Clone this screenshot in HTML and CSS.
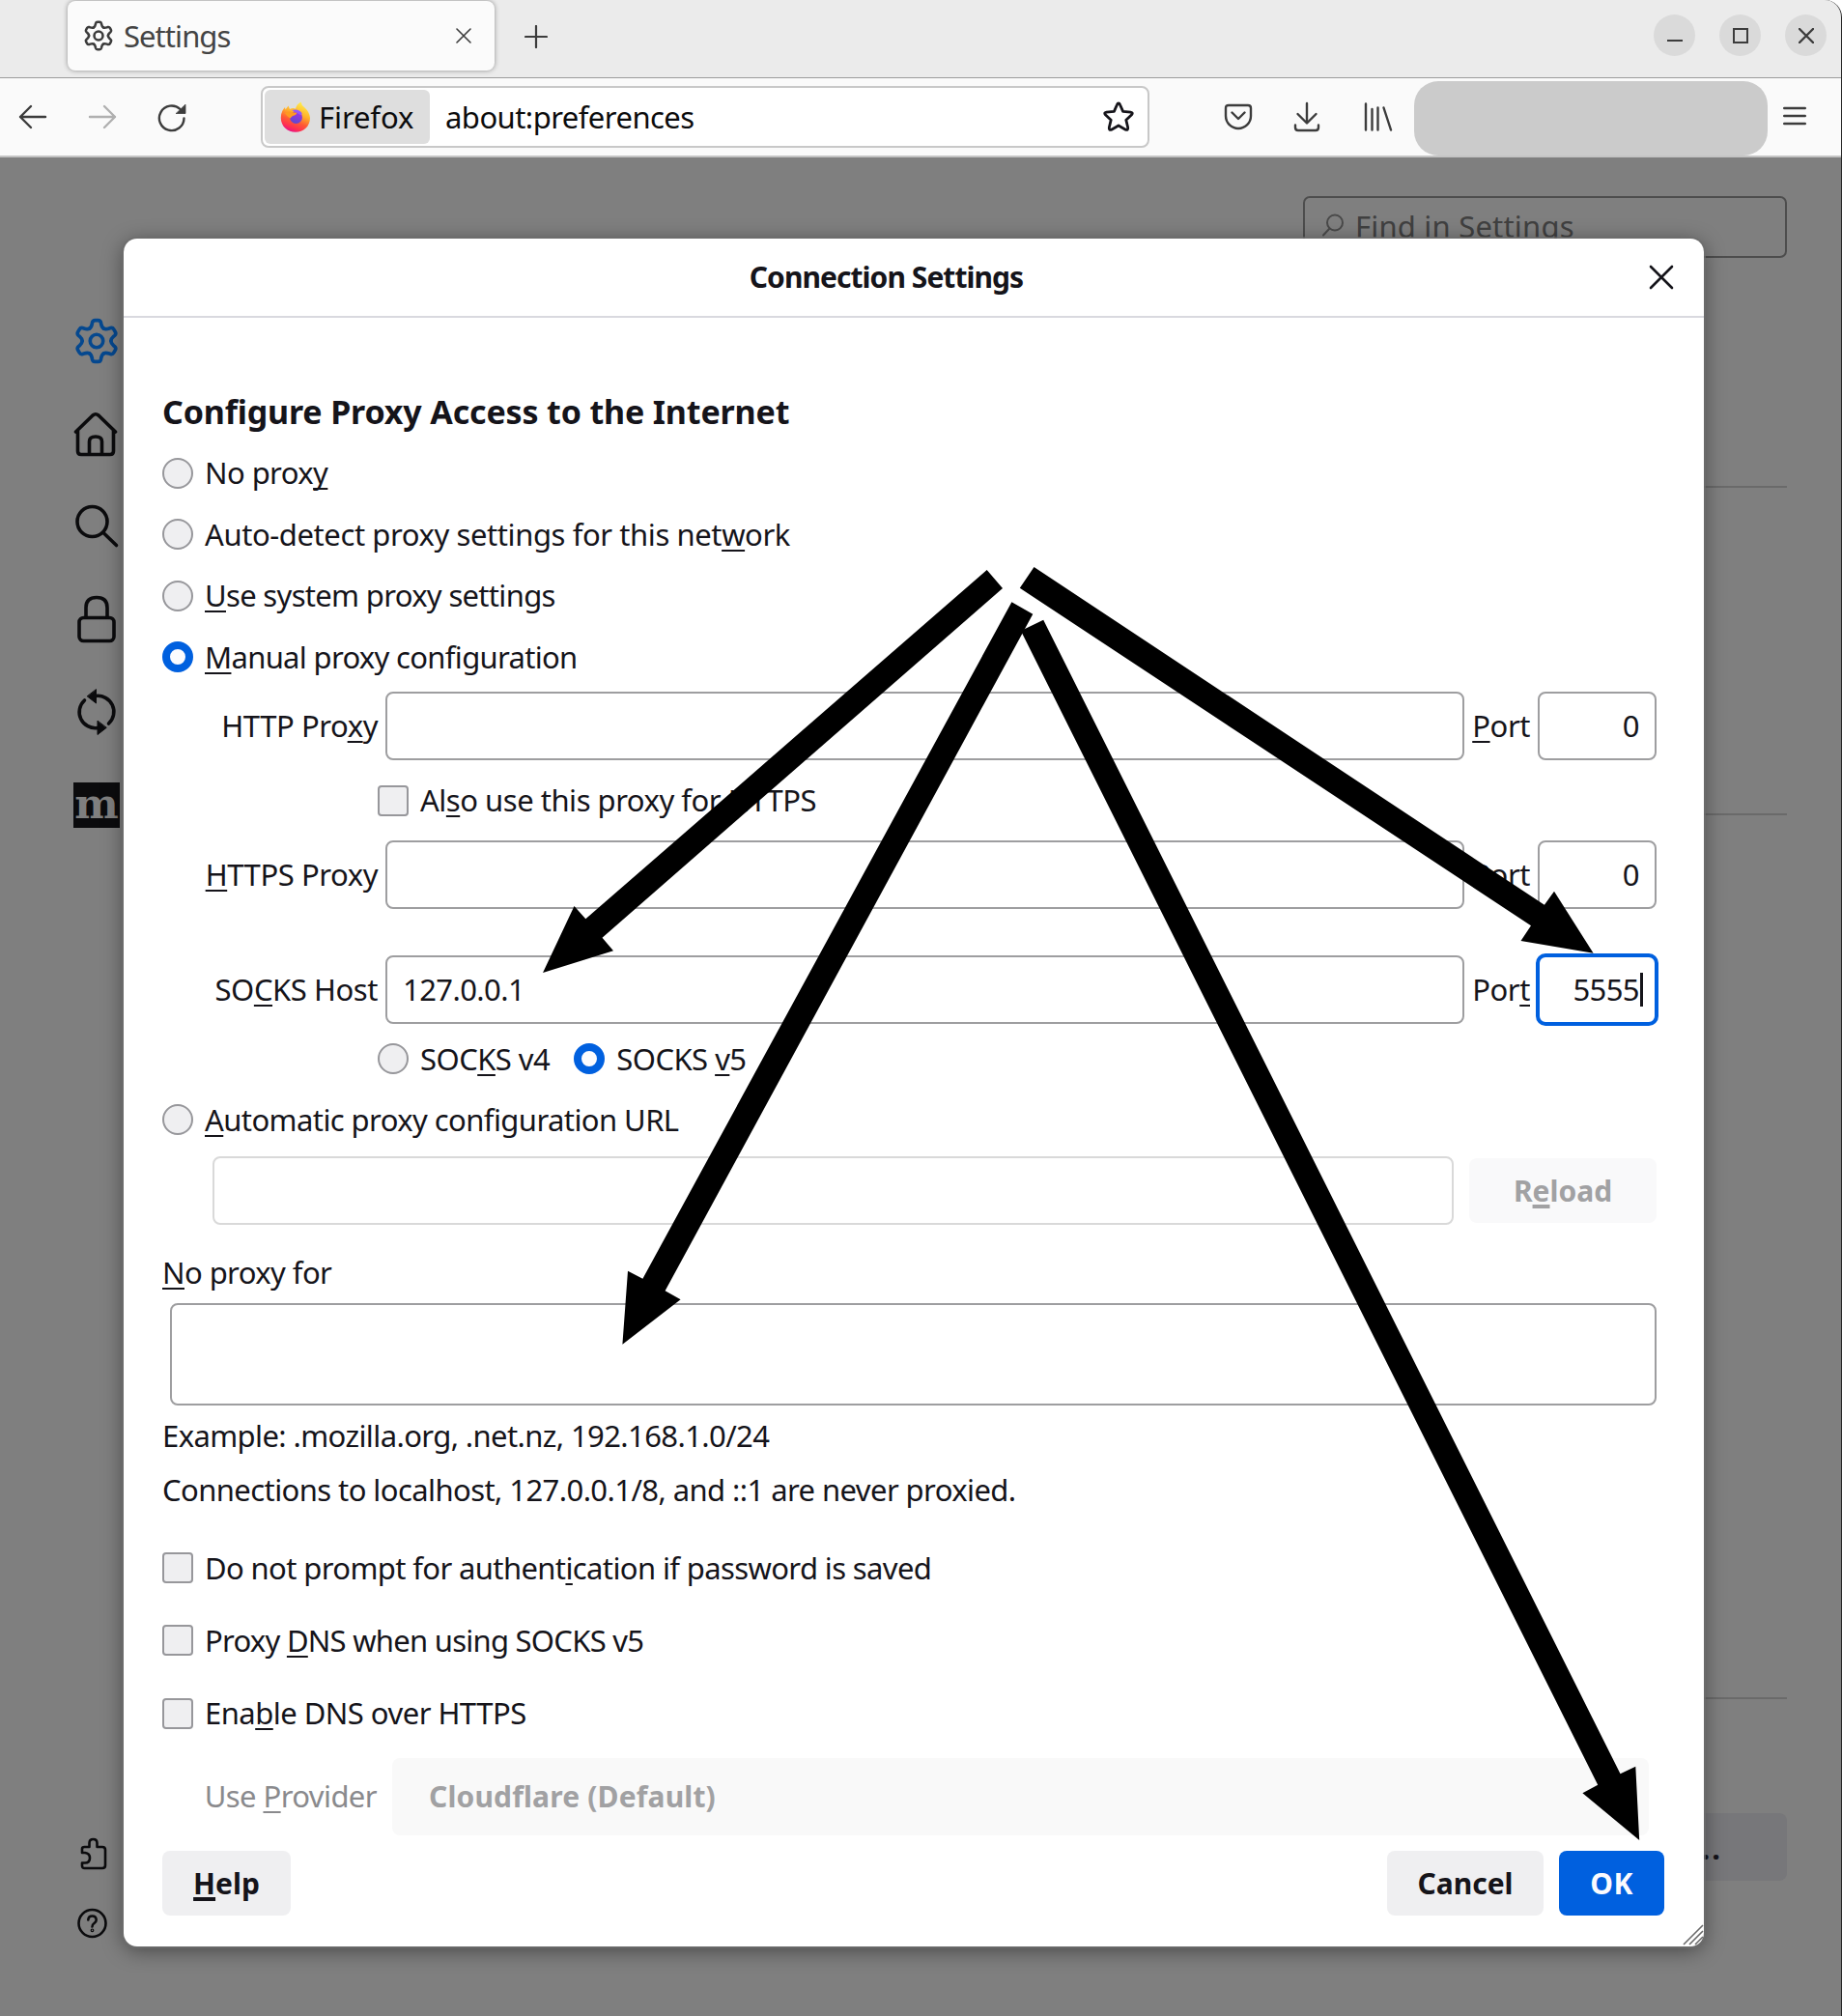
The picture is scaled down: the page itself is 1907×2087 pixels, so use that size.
FILE: index.html
```html
<!DOCTYPE html>
<html lang="en">
<head>
<meta charset="utf-8">
<title>Settings</title>
<link rel="stylesheet" href="styles.css">
</head>
<body>
<svg class="defs" width="0" height="0" aria-hidden="true">
  <defs>
    <path id="tooth" d="M-7.75 -13.4C-5.24 -14.85 -5.3 -17 -4.6 -20Q-4 -22.3 -1.7 -22.3H1.7Q4 -22.3 4.6 -20C5.3 -17 5.24 -14.85 7.75 -13.4"/>
    <g id="gear">
      <use href="#tooth"/><use href="#tooth" transform="rotate(60)"/><use href="#tooth" transform="rotate(120)"/>
      <use href="#tooth" transform="rotate(180)"/><use href="#tooth" transform="rotate(240)"/><use href="#tooth" transform="rotate(300)"/>
      <circle r="7"/>
    </g>
  </defs>
</svg>
<div class="window">
  <header class="tabs">
    <div class="tab">
      <svg class="icon" width="32" height="34" viewBox="-25 -26.5 50 53" stroke-width="4"><use href="#gear"/></svg>
      <span class="tab-title">Settings</span>
      <svg class="icon" width="16" height="16" viewBox="0 0 16 16" stroke-width="1.6"><path d="M1 1L15 15M15 1L1 15"/></svg>
    </div>
    <svg class="icon plus" width="24" height="24" viewBox="0 0 24 24" stroke-width="2.2"><path d="M12 1V23M1 12H23"/></svg>
    <div class="controls">
      <span class="control"><svg class="icon" width="16" height="16" viewBox="0 0 16 16" stroke-width="2"><path d="M0 13H16" stroke-linecap="butt"/></svg></span>
      <span class="control"><svg class="icon sharp" width="16" height="16" viewBox="0 0 16 16" stroke-width="2"><path d="M1 1H15V15H1Z"/></svg></span>
      <span class="control"><svg class="icon" width="16" height="16" viewBox="0 0 16 16" stroke-width="2.4"><path d="M1 1L15 15M15 1L1 15"/></svg></span>
    </div>
  </header>
  <nav class="toolbar">
    <svg class="icon back" width="30" height="26" viewBox="0 0 30 26" stroke-width="2.4"><path d="M28 13H2M13 2L2 13L13 24"/></svg>
    <svg class="icon forward" width="30" height="26" viewBox="0 0 30 26" stroke-width="2.4"><path d="M2 13H28M17 2L28 13L17 24"/></svg>
    <svg class="icon reload" width="30" height="30" viewBox="0 0 30 30" stroke-width="2.4"><path d="M27.500 15.500A12.800 12.800 0 1 1 23.500 6"/><path d="M29 1.500V10.500H19.500Z" fill="#3c3c3c" stroke-width=".8"/></svg>
    <div class="urlbar">
      <span class="identity">
        <svg width="32" height="32" viewBox="0 0 32 32">
          <defs>
            <linearGradient id="flame" x1=".75" y1="0" x2=".35" y2="1"><stop offset="0" stop-color="#fff44f"/><stop offset=".4" stop-color="#ffb02a"/><stop offset=".65" stop-color="#ff5a35"/><stop offset=".85" stop-color="#ff3050"/><stop offset="1" stop-color="#e6108a"/></linearGradient>
            <linearGradient id="globe" x1=".7" y1="0" x2=".3" y2="1"><stop offset="0" stop-color="#a633e0"/><stop offset="1" stop-color="#5a4ad0"/></linearGradient>
          </defs>
          <path d="M2.500 9.500Q3.500 7.500 5 6L5.500 8.500L8.500 4.500L10 8Q13 6.500 16 7.500Q17 3 21.500 .5Q22 4 25.500 6.500Q30.500 11 31 17C31 26 24 31.800 16 31.800S.8 26 .8 17Q.8 12.500 2.500 9.500Z" fill="url(#flame)"/>
          <circle cx="16.500" cy="16.500" r="6.500" fill="url(#globe)"/>
          <path d="M5 12Q10 9.500 14 11.500H17.500Q17 14 13 15Q11.500 16 10.500 17.500Q7 15.500 5 12Z" fill="#ff9a1f"/>
          <path d="M12 9Q19 7 22.500 12Q23 14.500 21 14Q17 11 12 9Z" fill="#9059ff"/>
        </svg>
        <span>Firefox</span>
      </span>
      <span class="url">about:preferences</span>
      <svg class="icon star" width="34" height="34" viewBox="0 0 34 34" stroke-width="2.8"><path d="M17 3Q18 3 18.600 4.500L21.600 11.400L29.500 12.100Q32.500 12.600 30.600 14.800L24.800 20.200L26.700 28Q27 31.200 24.300 30.200L17 26L9.700 30.200Q7 31.200 7.300 28L9.200 20.200L3.400 14.800Q1.500 12.600 4.500 12.100L12.400 11.400L15.400 4.500Q16 3 17 3Z"/></svg>
    </div>
    <svg class="icon pocket" width="30" height="28" viewBox="0 0 30 28" stroke-width="2.4"><path d="M5 2H25Q28 2 28 5V13A13 13 0 0 1 2 13V5Q2 2 5 2ZM8.500 9.500L15 16L21.500 9.500"/></svg>
    <svg class="icon download" width="28" height="32" viewBox="0 0 28 32" stroke-width="2.4"><path d="M14 2V22M4.500 13L14 22.500L23.500 13M2 24.500V27Q2 30 5 30H23Q26 30 26 27V24.500"/></svg>
    <svg class="icon library" width="30" height="30" viewBox="0 0 30 30" stroke-width="2.400"><path d="M2 1.500V28.500M8.500 7V28.500M14.500 5.500V28.500M20.500 5.500L28 28.500"/></svg>
    <div class="redacted"></div>
    <svg class="icon menu" width="24" height="20" viewBox="0 0 24 20" stroke-width="2.400"><path d="M1.200 2H22.800M1.200 10H22.800M1.200 18H22.800"/></svg>
  </nav>
  <main class="page">
    <aside class="sidebar">
      <svg class="icon category selected" width="48" height="50" viewBox="-25 -26 50 52" stroke-width="3.800"><use href="#gear"/></svg>
      <svg class="icon category home" width="48" height="48" viewBox="0 0 48 48" stroke-width="3.600"><path d="M2.500 22L20 5Q23 2.500 26 5L43.500 22M4.500 20V42Q4.500 45.500 8 45.500H38Q41.500 45.500 41.500 42V20M16.500 45V32Q16.500 27 23 27T29.500 32V45"/></svg>
      <svg class="icon category" width="48" height="48" viewBox="0 0 48 48" stroke-width="3.600"><circle cx="19.500" cy="19" r="15.500"/><path d="M31 30.500L44.500 43.500"/></svg>
      <svg class="icon category" width="48" height="50" viewBox="0 0 48 50" stroke-width="3.600"><rect x="6" y="23.500" width="36" height="24" rx="4.500"/><path d="M13 23V13Q13 2.500 24 2.500T35 13V23"/></svg>
      <svg class="icon category" width="48" height="50" viewBox="0 0 48 50" stroke-width="3.600"><path d="M23 7.500A16.500 16.500 0 0 1 36.500 36M25 40.500A16.500 16.500 0 0 1 11.500 12"/><path d="M23.500 1V15L14.500 8ZM25 33.500V47.500L34 40.500Z" fill="#0b0b0d" stroke-width="1"/></svg>
      <div class="moz">m</div>
      <svg class="icon small puzzle" width="28" height="34" viewBox="0 0 28 34" stroke-width="2.600"><path d="M2 15V12Q2 10 4.500 10H9.500V6Q9.500 2 13.500 2T17.500 6V10H23Q26 10 26 13V29Q26 32 23 32H4.500Q2 32 2 29.500V26.500H5Q10 26.500 10 21.500T5 16H2Z"/></svg>
      <svg class="icon small" width="32" height="32" viewBox="0 0 32 32" stroke-width="2.600"><circle cx="15.500" cy="16" r="14"/><path d="M11.300 12.500Q11.500 8.500 15.500 8.500T19.700 12.500Q19.700 14.500 17.500 16T15.500 19.500"/><circle cx="15.500" cy="23.300" r=".6"/></svg>
    </aside>
    <section class="content">
      <div class="find">
        <svg class="icon" width="24" height="24" viewBox="0 0 24 24" stroke-width="2"><circle cx="14" cy="9.500" r="8"/><path d="M8.500 15.500L2 22.500"/></svg>
        <span>Find in Settings</span>
      </div>
      <hr class="rule first"><hr class="rule second"><hr class="rule third">
      <div class="more">...</div>
    </section>
  </main>
</div>

<div class="dialog" role="dialog">
  <header class="dialog-head">
    <h1 class="dialog-title">Connection Settings</h1>
    <svg class="icon" width="26" height="26" viewBox="0 0 26 26" stroke-width="2.600"><path d="M2 2L24 24M24 2L2 24"/></svg>
  </header>
  <div class="dialog-body">
    <h2 class="heading">Configure Proxy Access to the Internet</h2>
    <div class="choice r1"><i class="radio"></i><span>No prox<u>y</u></span></div>
    <div class="choice r2"><i class="radio"></i><span>Auto-detect proxy settings for this net<u>w</u>ork</span></div>
    <div class="choice r3"><i class="radio"></i><span><u>U</u>se system proxy settings</span></div>
    <div class="choice r4"><i class="radio on"></i><span><u>M</u>anual proxy configuration</span></div>
    <div class="field f1"><label>HTTP Pro<u>x</u>y</label><div class="input"></div><label><u>P</u>ort</label><div class="input port">0</div></div>
    <div class="choice inner c1"><i class="check"></i><span>Al<u>s</u>o use this proxy for HTTPS</span></div>
    <div class="field f2"><label><u>H</u>TTPS Proxy</label><div class="input"></div><label>P<u>o</u>rt</label><div class="input port">0</div></div>
    <div class="field f3"><label>SO<u>C</u>KS Host</label><div class="input">127.0.0.1</div><label>Por<u>t</u></label><div class="input port focused">5555<i class="caret"></i></div></div>
    <div class="choice inner s1"><i class="radio"></i><span class="v4">SOC<u>K</u>S v4</span><i class="radio on"></i><span>SOCKS <u>v</u>5</span></div>
    <div class="choice r5"><i class="radio"></i><span><u>A</u>utomatic proxy configuration URL</span></div>
    <div class="auto-url"><div class="input disabled"></div><div class="button disabled"><span>R<u>e</u>load</span></div></div>
    <div class="line l1"><u>N</u>o proxy for</div>
    <div class="textarea"></div>
    <div class="line l2">Example: .mozilla.org, .net.nz, 192.168.1.0/24</div>
    <div class="line l3">Connections to localhost, 127.0.0.1/8, and ::1 are never proxied.</div>
    <div class="choice k1"><i class="check"></i><span>Do not prompt for authent<u>i</u>cation if password is saved</span></div>
    <div class="choice k2"><i class="check"></i><span>Proxy <u>D</u>NS when using SOCKS v5</span></div>
    <div class="choice k3"><i class="check"></i><span>Ena<u>b</u>le DNS over HTTPS</span></div>
    <div class="provider"><label>Use <u>P</u>rovider</label><div class="select">Cloudflare (Default)</div></div>
    <footer class="actions">
      <div class="button help"><span><u>H</u>elp</span></div>
      <div class="button cancel">Cancel</div>
      <div class="button ok">OK</div>
    </footer>
  </div>
  <svg class="resizer" width="22" height="22" viewBox="0 0 22 22"><path d="M1 21L21 1M7 21L21 7M13 21L21 13M18 21L21 18"/></svg>
</div>

<svg class="arrows" width="1907" height="2087" viewBox="0 0 1907 2087">
  <path d="M1021.700 590L1038 609L623.500 970.700L635 984.300L562 1007L594.500 938L606.300 951.300Z"/>
  <path d="M1047.400 623.300L1069.300 635.700L688.600 1336.300L704.600 1345.300L644.400 1391.700L650 1315.700L665.400 1323.700Z"/>
  <path d="M1070.500 587L1055.800 608.700L1585 958.200L1574.500 974.100L1649.600 986.700L1609 922.700L1598.900 936.800Z"/>
  <path d="M1080.200 641.700L1056.900 653.100L1654.200 1847.700L1638.400 1856.300L1697.200 1905L1693.300 1828.700L1677.500 1836.300Z"/>
</svg>
</body>
</html>
```
FILE: styles.css
```css
* { box-sizing: border-box; }
body { margin: 0; width: 1907px; height: 2087px; position: relative; overflow: hidden; background: #fff; color: #15141a; font: 31px/32px "Noto Sans", "Open Sans", sans-serif; letter-spacing: -.58px; white-space: nowrap; }
u { text-decoration: underline; text-decoration-thickness: 2px; text-underline-offset: 4px; text-decoration-skip-ink: none; }
.defs { position: absolute; }
.icon { display: block; flex: none; fill: none; stroke: #3c3c3c; stroke-linecap: round; stroke-linejoin: round; }
.icon.sharp { stroke-linejoin: miter; }

.window { height: 2087px; display: flex; flex-direction: column; border-right: 1px solid #262626; border-top-right-radius: 18px; overflow: hidden; background: #7f7f7f; }
.tabs { height: 81px; flex: none; display: flex; align-items: flex-start; padding-left: 70px; background: #ebebeb; border-bottom: 1px solid #9c9c9c; }
.tab { width: 442px; height: 72px; margin-top: 1px; display: flex; align-items: center; padding: 0 24px 0 16px; border-radius: 8px; background: #fbfbfb; box-shadow: 0 0 5px rgba(0,0,0,.4); color: #444; }
.tab-title { margin-left: 10px; flex: 1; letter-spacing: -.95px; }
.plus { margin: 26px 0 0 31px; }
.controls { margin-left: auto; margin-right: 15px; padding-top: 15px; display: flex; gap: 25px; }
.control { width: 43px; height: 43px; border-radius: 50%; background: #dadada; display: flex; align-items: center; justify-content: center; }

.toolbar { height: 82px; flex: none; display: flex; align-items: center; padding-left: 19px; background: #fafafa; border-bottom: 2px solid #c4c4c4; }
.forward { margin-left: 42px; stroke: #b0b0b0; }
.reload { margin: 2px 0 0 42px; }
.urlbar { width: 920px; height: 64px; margin-left: 77px; padding: 2px 13px 2px 2px; display: flex; align-items: center; border: 2px solid #c8c8c8; border-radius: 8px; background: #fff; color: #0c0c0d; }
.identity { width: 171px; height: 56px; padding-left: 16px; display: flex; align-items: center; gap: 8px; border-radius: 6px; background: #dedede; letter-spacing: -.1px; }
.url { margin-left: 16px; flex: 1; letter-spacing: -.54px; }
.star { stroke: #15141a; }
.pocket { margin-left: 77px; }
.download { margin-left: 42px; }
.library { margin-left: 45px; }
.redacted { width: 366px; height: 77px; margin: 3px 16px 0 22px; border-radius: 25px; background: #cbcbcb; }
.menu { margin-top: -2px; }

.page { flex: 1; display: flex; justify-content: space-between; }
.sidebar { width: 128px; padding: 165px 0 0 76px; display: flex; flex-direction: column; }
.category { margin-bottom: 47px; stroke: #0b0b0d; }
.category.selected { stroke: #05488f; }
.category.home { margin-bottom: 48px; }
.moz { width: 48px; height: 47px; background: #0b0b0d; color: #7f7f7f; font: bold 43px/45px "DejaVu Serif", serif; letter-spacing: 0; text-align: center; }
.small { margin-left: 4px; stroke: #0b0b0d; }
.puzzle { margin: 1045px 0 39px 7px; }
.content { width: 501px; margin-right: 56px; padding-top: 40px; }
.find { height: 64px; padding: 0 0 2px 17px; display: flex; align-items: center; gap: 11px; border: 2px solid #4d4d4d; border-radius: 7px; color: #404040; letter-spacing: .2px; }
.find .icon { stroke: #4a4a4a; margin-top: -3px; }
.rule { height: 2px; margin: 0; border: 0; background: #6a6a6a; }
.first { margin-top: 236px; }
.second { margin-top: 337px; }
.third { margin-top: 913px; }
.more { height: 70px; margin-top: 118px; padding: 20px 67px 0; border-radius: 8px; background: #77777a; font-weight: bold; letter-spacing: 2px; text-align: right; }

.dialog { position: absolute; left: 128px; top: 247px; width: 1636px; height: 1768px; border-radius: 14px; background: #fff; box-shadow: 0 0 0 2px rgba(110,110,110,.7), 0 4px 22px rgba(0,0,0,.45); }
.dialog-head { height: 82px; padding-right: 31px; display: flex; align-items: center; border-bottom: 2px solid #d9d9df; }
.dialog-head .icon { stroke: #15141a; }
.dialog-title { margin: 0; flex: 1; font-size: 30px; letter-spacing: -.95px; text-align: center; }
.dialog-body { padding: 74px 49px 0 40px; }
.heading { margin: 0 0 25px; font-size: 34px; line-height: 46px; letter-spacing: -.16px; }
.choice { height: 32px; display: flex; align-items: flex-start; line-height: 32px; }
.choice.r1, .choice.r3, .choice.k3 { line-height: 31px; }
.radio, .check { flex: none; width: 32px; height: 32px; margin-right: 12px; border: 2px solid #97979b; background: #efeff1; }
.radio { border-radius: 50%; }
.check { border-radius: 4px; }
.radio.on { border: 8px solid #0060df; background: #fbfbfe; }
.r2, .r3, .r4 { margin-top: 31.400px; }
.r2 { letter-spacing: -.41px; }
.r3, .r4 { letter-spacing: -.68px; }
.inner { margin-left: 223px; }
.c1 { letter-spacing: -.48px; }
.choice.c1 { line-height: 31px; }
.s1 { letter-spacing: -.54px; }
.v4 { margin-right: 25px; }
.field { height: 71px; display: grid; grid-template-columns: 231px 1117px 76px 123px; align-items: center; }
.field label { text-align: right; padding: 0 8px 1px 0; letter-spacing: -.44px; }
.input { height: 71px; display: flex; align-items: center; padding: 0 18px 1px 16px; border: 2px solid #9e9ea0; border-radius: 8px; background: #fff; }
.input.disabled { flex: 1; border-color: #d9d9d9; }
.input.port { justify-content: flex-end; padding-right: 16px; }
.input.port.focused { margin: -2px; height: 75px; border: 4px solid #0060df; border-radius: 10px; padding-right: 12px; }
.caret { width: 3px; height: 35px; background: #15141a; margin-left: 1px; }
.f1 { margin-top: 20px; }
.c1 { margin-top: 26px; }
.f2 { margin-top: 25px; }
.f3 { margin-top: 48px; }
.s1 { margin-top: 20px; }
.r5 { margin-top: 31px; }
.auto-url { margin: 22px 0 0 52px; display: flex; align-items: center; gap: 16px; }
.button { height: 67px; display: flex; align-items: center; justify-content: center; padding-top: 1px; border-radius: 8px; background: #efeff1; font-size: 30px; font-weight: bold; letter-spacing: 0; }
.button u { text-decoration-thickness: 4px; text-underline-offset: 3px; }
.button.disabled { width: 194px; background: #f9f9fa; color: #a1a1a3; }
.l1 { margin-top: 33px; }
.textarea { margin: 16px 0 0 8px; height: 106px; border: 2px solid #9e9ea0; border-radius: 8px; }
.l2 { margin-top: 15px; letter-spacing: -.6px; }
.l3 { margin-top: 24px; }
.k1 { margin-top: 49px; letter-spacing: -.62px; }
.k2 { margin-top: 43px; letter-spacing: -.74px; }
.k3 { margin-top: 44px; letter-spacing: -.53px; }
.provider { margin-top: 30px; height: 80px; display: flex; align-items: center; }
.provider label { width: 222px; margin-right: 16px; text-align: right; color: #8a8a8d; padding-bottom: 2px; }
.select { width: 1301px; height: 80px; padding: 0 0 1px 38px; display: flex; align-items: center; border-radius: 8px; background: #f9f9f9; color: #a1a1a3; font-size: 30px; font-weight: bold; letter-spacing: .16px; }
.actions { margin: 16px -8px 0 0; display: flex; gap: 16px; }
.help { width: 133px; margin-right: auto; }
.cancel { width: 162px; }
.ok { width: 109px; background: #0060df; color: #fbfbfe; letter-spacing: .5px; }
.resizer { position: absolute; right: 0; bottom: 1px; fill: none; stroke: #6a6a6a; stroke-width: 1.600; }
.arrows { position: absolute; left: 0; top: 0; fill: #000; }
```
